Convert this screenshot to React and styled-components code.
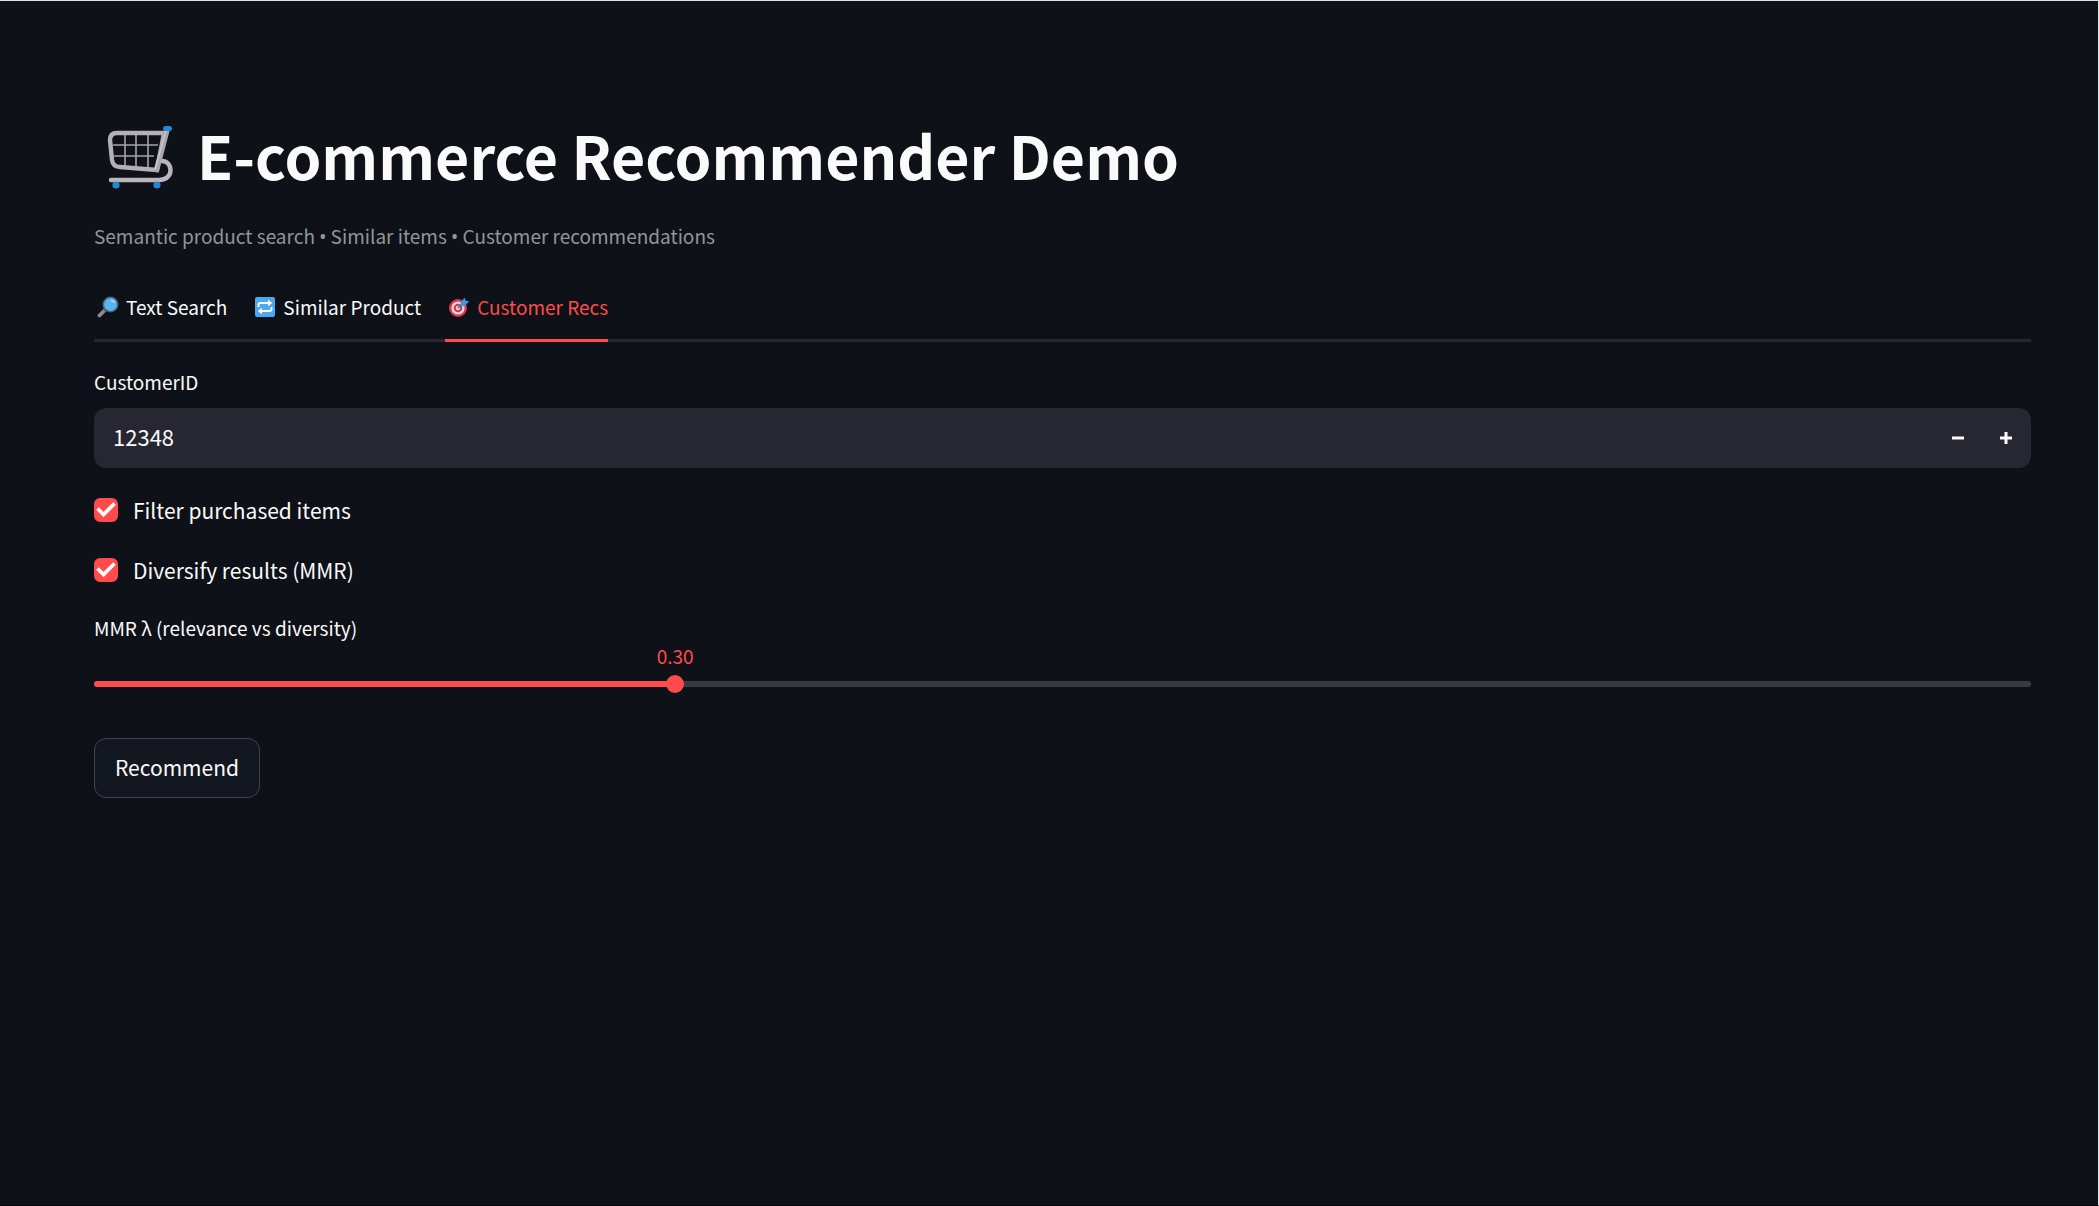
import React, { useState } from "react";
import styled, { createGlobalStyle } from "styled-components";

const GlobalStyle = createGlobalStyle`
  *, *::before, *::after { box-sizing: border-box; }
  body {
    margin: 0;
    background: #0e1117;
    color: #fafafa;
    font-family: "Noto Sans CJK SC", "Noto Sans", sans-serif;
  }
  button, input { font: inherit; color: inherit; }
`;

const Page = styled.div`
  min-height: 100vh;
  padding: 108px 67px 80px 94px;
  border-top: 1px solid #dde5e5;
  border-right: 1px solid #dde5e5;
  border-bottom: 1px solid #0a0410;
`;

const Main = styled.main`
  display: flex;
  flex-direction: column;
`;

const Title = styled.h1`
  display: flex;
  align-items: center;
  gap: 20px;
  margin: 0;
  padding: 0 0 4px 11px;
  font-size: 59px;
  line-height: 92px;
  font-weight: 700;
`;

const Caption = styled.p`
  margin: 15px 0 0;
  font-size: 19px;
  line-height: 32px;
  color: #939599;
`;

const Bullet = styled.span`
  font-family: "Noto Sans", sans-serif;
  line-height: 1;
`;

const TabList = styled.div`
  display: flex;
  gap: 24px;
  margin-top: 22px;
  border-bottom: 3px solid #262730;
`;

const Tab = styled.button`
  display: flex;
  align-items: center;
  gap: 7px;
  height: 68px;
  margin-bottom: -3px;
  padding: 0 0 0 3px;
  border: 0;
  border-bottom: 3px solid ${(p) => (p.$active ? "#ff4b4b" : "transparent")};
  background: none;
  color: ${(p) => (p.$active ? "#ff4b4b" : "#fafafa")};
  font-size: 19px;
  cursor: pointer;
`;

const FieldLabel = styled.label`
  font-size: 19px;
  line-height: 32px;
`;

const Field = styled.div`
  display: flex;
  flex-direction: column;
  gap: 10px;
  margin-top: 24px;
`;

const NumberBox = styled.div`
  display: flex;
  height: 60px;
  padding-right: 1px;
  overflow: hidden;
  border-radius: 12px;
  background: #262730;
`;

const NumberInput = styled.input`
  flex: 1;
  min-width: 0;
  padding: 0 19px 5px;
  border: 0;
  outline: 0;
  background: none;
  font-size: 22px;
  appearance: textfield;
  &::-webkit-inner-spin-button { appearance: none; }
`;

const StepButton = styled.button`
  display: grid;
  place-items: center;
  width: 48px;
  padding: 0;
  border: 0;
  background: none;
  cursor: pointer;
`;

const Checks = styled.div`
  display: flex;
  flex-direction: column;
  gap: 24px;
  margin-top: 24px;
`;

const CheckLabel = styled.label`
  display: flex;
  align-items: center;
  gap: 15px;
  font-size: 21px;
  line-height: 36px;
  cursor: pointer;
`;

const CheckFrame = styled.span`
  display: grid;
  width: 24px;
  height: 24px;
  & > * { grid-area: 1 / 1; }
`;

const CheckInput = styled.input`
  appearance: none;
  width: 24px;
  height: 24px;
  margin: 0;
  border: 2px solid #41444c;
  border-radius: 6px;
  &:checked { border-color: #ff4b4b; background: #ff4b4b; }
  &:not(:checked) + svg { visibility: hidden; }
`;

const CheckMark = styled.svg`
  place-self: center;
  pointer-events: none;
`;

const SliderField = styled.div`
  display: flex;
  flex-direction: column;
  margin-top: 24px;
`;

const SliderValue = styled.output`
  align-self: flex-start;
  margin-left: ${(p) => p.$percent}%;
  transform: translateX(-50%);
  color: #ff4b4b;
  font-size: 19px;
  line-height: 24px;
`;

const SliderRail = styled.div`
  display: flex;
  align-items: center;
  height: 6px;
  margin-top: 13px;
  border-radius: 3px;
  background: linear-gradient(
    to right,
    #ff4b4b ${(p) => p.$percent}%,
    #373a41 ${(p) => p.$percent}%
  );
`;

const SliderInput = styled.input`
  appearance: none;
  flex: 1;
  height: 18px;
  margin: 0 -9px;
  background: none;
  cursor: pointer;
  &::-webkit-slider-thumb {
    appearance: none;
    width: 18px;
    height: 18px;
    border-radius: 50%;
    background: #ff4b4b;
  }
`;

const ActionButton = styled.button`
  align-self: flex-start;
  height: 60px;
  margin-top: 51px;
  padding: 0 20px 2px;
  border: 1px solid #41434a;
  border-radius: 12px;
  background: #131720;
  font-size: 21px;
  cursor: pointer;
`;

const CartIcon = () => (
  <svg width="72" height="74" viewBox="0 -6 72 74" fill="none" aria-hidden="true">
    <g stroke="#a5a2a7" strokeWidth="1.6">
      <path d="M20 11v32M31 11v34M43 11v34M8 21h45M9 32h40" />
    </g>
    <path d="M59 9H12Q5 9 5 16l2 20q1 7 8 7l37 3Z" stroke="#b5b0b6" strokeWidth="4.4" strokeLinejoin="round" />
    <path d="M56 37c12-1 14 19-2 19H6" stroke="#b9b5bb" strokeWidth="4.4" strokeLinecap="round" />
    <path d="M62 6 51 48" stroke="#aaa7ac" strokeWidth="5.4" />
    <path d="M61 6 50 46" stroke="#cbc8cc" strokeWidth="1.4" />
    <rect x="58" y="2" width="9" height="5" rx="2.5" fill="#2389d5" />
    <circle cx="11" cy="61" r="3.6" fill="#2389d5" />
    <circle cx="52" cy="61" r="3.6" fill="#2389d5" />
  </svg>
);

const SearchIcon = () => (
  <svg width="22" height="22" viewBox="0 0 22 22" aria-hidden="true">
    <path d="m2.500 19.500 5-5" stroke="#8d8d91" strokeWidth="3.800" strokeLinecap="round" />
    <path d="m7 15 2-2" stroke="#55616b" strokeWidth="2" />
    <circle cx="13.500" cy="8.500" r="7.200" fill="#5cb3ee" stroke="#426783" strokeWidth="1.500" />
    <path d="M14 4.500q3 0 3.500 2.500" stroke="#b4e0fa" strokeWidth="1.400" fill="none" />
  </svg>
);

const RepeatIcon = () => (
  <svg width="22" height="22" viewBox="0 0 22 22" aria-hidden="true">
    <rect x="1" y="1" width="20" height="20" rx="2" fill="#4da9ef" />
    <path d="M4.500 11V9q0-2 2-2H15M17.500 11v2q0 2-2 2H7" fill="none" stroke="#fff" strokeWidth="1.900" />
    <path d="m14 3.800 4.200 3.200L14 10.200ZM8 11.800 3.800 15 8 18.200Z" fill="#fff" />
  </svg>
);

const TargetIcon = () => (
  <svg width="22" height="22" viewBox="0 0 22 22" aria-hidden="true">
    <circle cx="10" cy="12" r="9" fill="#d8384f" />
    <circle cx="10" cy="12" r="6.600" fill="#e0d9dc" />
    <circle cx="10" cy="12" r="4.300" fill="#d8384f" />
    <circle cx="10" cy="12" r="2.200" fill="#e0d9dc" />
    <path d="m10 12 7-7" stroke="#5b6671" strokeWidth="1.400" />
    <path d="m12.500 7 4-5.500 1 3 3.800 1-5 4.500-3.500.500Z" fill="#349be5" />
  </svg>
);

const tabs = [
  { name: "Text Search", Icon: SearchIcon },
  { name: "Similar Product", Icon: RepeatIcon },
  { name: "Customer Recs", Icon: TargetIcon },
];

function Check({ children }) {
  return (
    <CheckLabel>
      <CheckFrame>
        <CheckInput type="checkbox" defaultChecked />
        <CheckMark width="20" height="16" viewBox="0 0 20 16" fill="none" aria-hidden="true">
          <path d="m1.500 6.500 6 6L18.500 1.500" stroke="#fafafa" strokeWidth="3.800" />
        </CheckMark>
      </CheckFrame>
      {children}
    </CheckLabel>
  );
}

export default function App() {
  const [active, setActive] = useState("Customer Recs");
  const [customer, setCustomer] = useState(12348);
  const [lambda, setLambda] = useState(0.3);
  const percent = Math.round(lambda * 100);

  return (
    <>
      <GlobalStyle />
      <Page>
        <Main>
          <Title>
            <CartIcon />
            E-commerce Recommender Demo
          </Title>
          <Caption>
            Semantic product search <Bullet>•</Bullet> Similar items <Bullet>•</Bullet> Customer
            recommendations
          </Caption>
          <TabList role="tablist">
            {tabs.map(({ name, Icon }) => (
              <Tab
                key={name}
                role="tab"
                aria-selected={active === name}
                $active={active === name}
                onClick={() => setActive(name)}
              >
                <Icon />
                {name}
              </Tab>
            ))}
          </TabList>
          <Field>
            <FieldLabel htmlFor="customer">CustomerID</FieldLabel>
            <NumberBox>
              <NumberInput
                id="customer"
                type="number"
                value={customer}
                onChange={(e) => setCustomer(Number(e.target.value))}
              />
              <StepButton aria-label="Decrease" onClick={() => setCustomer(customer - 1)}>
                <svg width="12" height="12" viewBox="0 0 12 12" stroke="#fafafa" strokeWidth="3">
                  <path d="M0 6h12" />
                </svg>
              </StepButton>
              <StepButton aria-label="Increase" onClick={() => setCustomer(customer + 1)}>
                <svg width="12" height="12" viewBox="0 0 12 12" stroke="#fafafa" strokeWidth="3">
                  <path d="M0 6h12M6 0v12" />
                </svg>
              </StepButton>
            </NumberBox>
          </Field>
          <Checks>
            <Check>Filter purchased items</Check>
            <Check>Diversify results (MMR)</Check>
          </Checks>
          <SliderField>
            <FieldLabel htmlFor="lambda">MMR λ (relevance vs diversity)</FieldLabel>
            <SliderValue htmlFor="lambda" $percent={percent}>
              {lambda.toFixed(2)}
            </SliderValue>
            <SliderRail $percent={percent}>
              <SliderInput
                id="lambda"
                type="range"
                min="0"
                max="1"
                step="0.01"
                value={lambda}
                onChange={(e) => setLambda(Number(e.target.value))}
              />
            </SliderRail>
          </SliderField>
          <ActionButton>Recommend</ActionButton>
        </Main>
      </Page>
    </>
  );
}
